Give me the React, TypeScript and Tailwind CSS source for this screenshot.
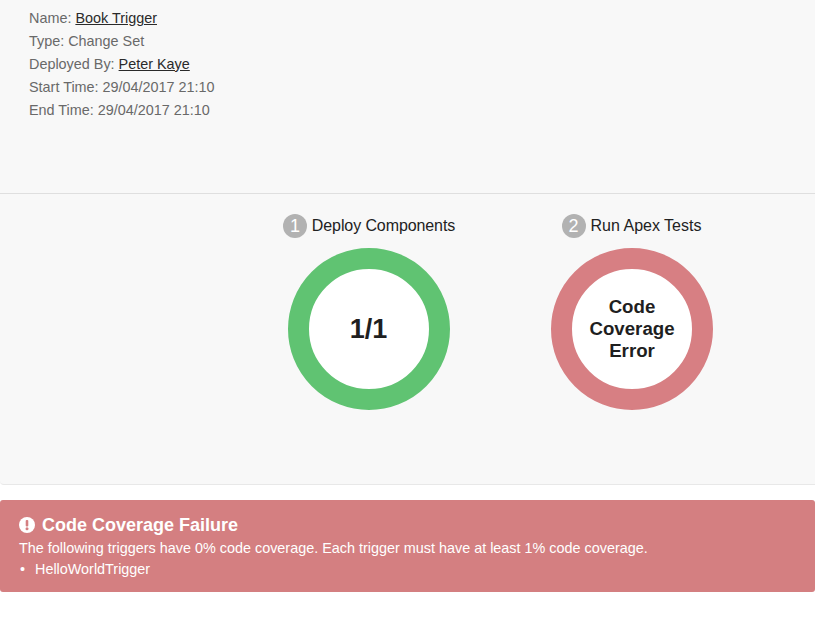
const details = [
  { label: "Name:", value: "Book Trigger", link: true },
  { label: "Type:", value: "Change Set" },
  { label: "Deployed By:", value: "Peter Kaye", link: true },
  { label: "Start Time:", value: "29/04/2017 21:10" },
  { label: "End Time:", value: "29/04/2017 21:10" },
];

const Step = ({ num, title, ring, children, titleClass }: { num: number; title: string; ring: string; children: React.ReactNode; titleClass: string }) => (
  <div className="flex w-[263px] shrink-0 flex-col items-center">
    <div className={`flex h-6 items-center gap-[5px] whitespace-nowrap text-[16px] text-[#222] ${titleClass}`}>
      <span className="flex h-6 w-6 items-center justify-center rounded-full bg-[#b2b2b2] text-[18px] text-white">{num}</span>
      <span>{title}</span>
    </div>
    <div className={`mt-[10px] flex h-[162px] w-[162px] items-center justify-center rounded-full border-[21px] bg-white ${ring}`}>
      {children}
    </div>
  </div>
);

export default function App() {
  return (
    <div className="h-[624px] w-[815px] overflow-hidden bg-white font-['Liberation_Sans',Arial,sans-serif]">
      <div className="rounded-bl-[4px] border-b border-[#e8e8e8] bg-[#f8f8f8]">
        <div className="h-[194px] border-b border-[#dfdfdf] pl-[29px] pt-[7px] text-[14.4px] leading-[23px] text-[#696969]">
          {details.map((d) => (
            <div key={d.label}>
              {d.label}{" "}
              {d.link ? <a className="text-[#2a2a2a] underline">{d.value}</a> : d.value}
            </div>
          ))}
        </div>
        <div className="flex h-[290px] pl-[237px] pt-[20px]">
          <Step num={1} title="Deploy Components" ring="border-[#60c372]" titleClass="pl-px tracking-[-0.1px]">
            <span className="text-[27px] font-bold text-[#1f1f1f]">1/1</span>
          </Step>
          <Step num={2} title="Run Apex Tests" ring="border-[#d77f83]" titleClass="">
            <span className="block pl-px text-center text-[18.7px] font-bold leading-[22px] text-[#1f1f1f]">
              Code
              <br />
              Coverage
              <br />
              Error
            </span>
          </Step>
        </div>
      </div>
      <div className="mt-[15px] h-[92px] rounded-[3px] bg-[#d47f81] pl-[19px] pt-[14px] text-white">
        <div className="flex h-[22px] items-center gap-[7px] text-[18px] font-bold">
          <svg width="16" height="16" viewBox="0 0 16 16" className="shrink-0">
            <circle cx="8" cy="8" r="8" fill="#fff" />
            <rect x="6.7" y="3" width="2.6" height="6.5" rx="1" fill="#d47f81" />
            <circle cx="8" cy="11.8" r="1.5" fill="#d47f81" />
          </svg>
          Code Coverage Failure
        </div>
        <div className="mt-[2px] text-[14.4px] leading-[21px]">
          The following triggers have 0% code coverage. Each trigger must have at least 1% code coverage.
        </div>
        <ul className="text-[14.4px] leading-[21px]">
          <li className="flex">
            <span className="w-4 pl-px">•</span>
            HelloWorldTrigger
          </li>
        </ul>
      </div>
    </div>
  );
}
